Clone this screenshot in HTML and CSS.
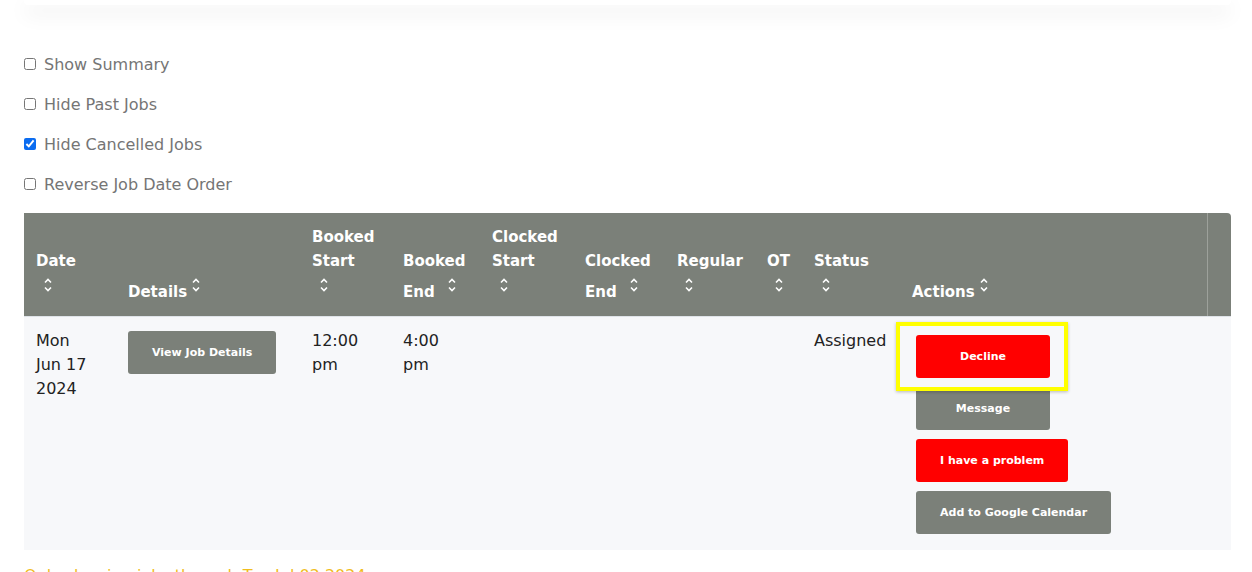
FILE: index.html
```html
<!DOCTYPE html>
<html lang="en">
<head>
    <meta charset="UTF-8">
    <meta name="viewport" content="width=device-width, initial-scale=1.0">
    <title>My Jobs</title>
    <link rel="stylesheet" href="styles.css">
</head>
<body>

    <div class="page">
        <div class="top-card"></div>

        <div class="filters">
            <label class="filter"><input type="checkbox"> Show Summary</label>
            <label class="filter"><input type="checkbox"> Hide Past Jobs</label>
            <label class="filter"><input type="checkbox" checked> Hide Cancelled Jobs</label>
            <label class="filter"><input type="checkbox"> Reverse Job Date Order</label>
        </div>

        <table class="jobs">
            <colgroup>
                <col style="width: 92px">
                <col style="width: 184px">
                <col style="width: 91px">
                <col style="width: 89px">
                <col style="width: 93px">
                <col style="width: 92px">
                <col style="width: 90px">
                <col style="width: 47px">
                <col style="width: 98px">
                <col style="width: 307px">
                <col>
            </colgroup>
            <thead>
                <tr>
                    <th>Date<br><svg class="sort" viewBox="0 0 8 16"><polyline points="1,5.5 4,2.5 7,5.5"/><polyline points="1,10.5 4,13.5 7,10.5"/></svg></th>
                    <th>Details <svg class="sort" viewBox="0 0 8 16"><polyline points="1,5.5 4,2.5 7,5.5"/><polyline points="1,10.5 4,13.5 7,10.5"/></svg></th>
                    <th>Booked<br>Start<br><svg class="sort" viewBox="0 0 8 16"><polyline points="1,5.5 4,2.5 7,5.5"/><polyline points="1,10.5 4,13.5 7,10.5"/></svg></th>
                    <th>Booked<br>End <svg class="sort" viewBox="0 0 8 16"><polyline points="1,5.5 4,2.5 7,5.5"/><polyline points="1,10.5 4,13.5 7,10.5"/></svg></th>
                    <th>Clocked<br>Start<br><svg class="sort" viewBox="0 0 8 16"><polyline points="1,5.5 4,2.5 7,5.5"/><polyline points="1,10.5 4,13.5 7,10.5"/></svg></th>
                    <th>Clocked<br>End <svg class="sort" viewBox="0 0 8 16"><polyline points="1,5.5 4,2.5 7,5.5"/><polyline points="1,10.5 4,13.5 7,10.5"/></svg></th>
                    <th>Regular<br><svg class="sort" viewBox="0 0 8 16"><polyline points="1,5.5 4,2.5 7,5.5"/><polyline points="1,10.5 4,13.5 7,10.5"/></svg></th>
                    <th>OT<br><svg class="sort" viewBox="0 0 8 16"><polyline points="1,5.5 4,2.5 7,5.5"/><polyline points="1,10.5 4,13.5 7,10.5"/></svg></th>
                    <th>Status<br><svg class="sort" viewBox="0 0 8 16"><polyline points="1,5.5 4,2.5 7,5.5"/><polyline points="1,10.5 4,13.5 7,10.5"/></svg></th>
                    <th>Actions <svg class="sort" viewBox="0 0 8 16"><polyline points="1,5.5 4,2.5 7,5.5"/><polyline points="1,10.5 4,13.5 7,10.5"/></svg></th>
                    <th class="spacer"></th>
                </tr>
            </thead>
            <tbody>
                <tr>
                    <td>Mon<br>Jun 17<br>2024</td>
                    <td><button class="btn btn-gray view-btn">View Job Details</button></td>
                    <td>12:00<br>pm</td>
                    <td>4:00<br>pm</td>
                    <td></td>
                    <td></td>
                    <td></td>
                    <td></td>
                    <td>Assigned</td>
                    <td class="actions">
                        <div class="highlight-wrap">
                            <button class="btn btn-red">Decline</button>
                            <span class="highlight"></span>
                        </div>
                        <button class="btn btn-gray">Message</button>
                        <button class="btn btn-red">I have a problem</button>
                        <button class="btn btn-gray">Add to Google Calendar</button>
                    </td>
                    <td></td>
                </tr>
            </tbody>
        </table>

        <p class="notice">Only showing jobs through Tue Jul 02 2024</p>
    </div>

</body>
</html>
```

FILE: styles.css
```css
body {
    margin: 0;
    font-family: "DejaVu Sans", "Open Sans", sans-serif;
    font-size: 16px;
    color: #222;
    background: white;
    overflow: hidden;
}

.page {
    padding: 0 21px 0 24px;
}

.top-card {
    height: 5px;
    background: white;
    box-shadow: 0 8px 20px rgba(0, 0, 0, 0.12);
    border-radius: 0 0 4px 4px;
}

.filters {
    margin-top: 47px;
}

.filter {
    display: flex;
    align-items: center;
    height: 24px;
    margin-bottom: 16px;
    color: #757575;
    font-size: 16px;
}

.filter input {
    width: 12px;
    height: 12px;
    margin: 0 8px 0 0;
    accent-color: #0b6cf0;
}

.jobs {
    width: 100%;
    table-layout: fixed;
    border-collapse: collapse;
    margin-top: 17px;
}

.jobs th {
    background-color: #7b8079;
    color: white;
    font-size: 15px;
    font-weight: bold;
    text-align: left;
    vertical-align: bottom;
    line-height: 24px;
    padding: 12px 0 12px 12px;
    border-bottom: 1px solid #dfe3e8;
}

.jobs th.spacer {
    border-left: 1px solid #9da19b;
    border-top-right-radius: 4px;
}

.sort {
    width: 8px;
    height: 16px;
    margin: 4px 0 0 8px;
    vertical-align: 4px;
    fill: none;
    stroke: white;
    stroke-width: 1.6;
}

th .sort:first-child {
    margin-left: 0;
}

.jobs td {
    background-color: #f7f8fa;
    vertical-align: top;
    line-height: 24px;
    padding: 12px 0 12px 12px;
}

.btn {
    display: block;
    min-width: 134px;
    height: 43px;
    padding: 0 24px;
    border: none;
    border-radius: 3px;
    color: white;
    font-family: "DejaVu Sans", "Open Sans", sans-serif;
    font-size: 11px;
    font-weight: 600;
    margin: 0;
    cursor: pointer;
}

.btn-gray {
    background-color: #7b8079;
}

.btn-red {
    background-color: #ff0000;
}

.view-btn {
    margin-top: 2px;
}

.actions {
    padding-left: 16px !important;
}

.actions > * {
    margin: 0 0 9px;
}

.actions > :first-child {
    margin-top: 6px;
}

.actions > :last-child {
    margin-bottom: 4px;
}

.highlight-wrap {
    position: relative;
    width: fit-content;
}

.highlight {
    position: absolute;
    top: -13px;
    left: -20px;
    right: -18px;
    bottom: -13px;
    border: 4px solid #ffff00;
    box-shadow: 0 1px 3px rgba(0, 0, 0, 0.25);
}

.notice {
    margin: 14px 0 0;
    color: #f0bd1e;
    font-size: 16px;
    line-height: 24px;
}
```
